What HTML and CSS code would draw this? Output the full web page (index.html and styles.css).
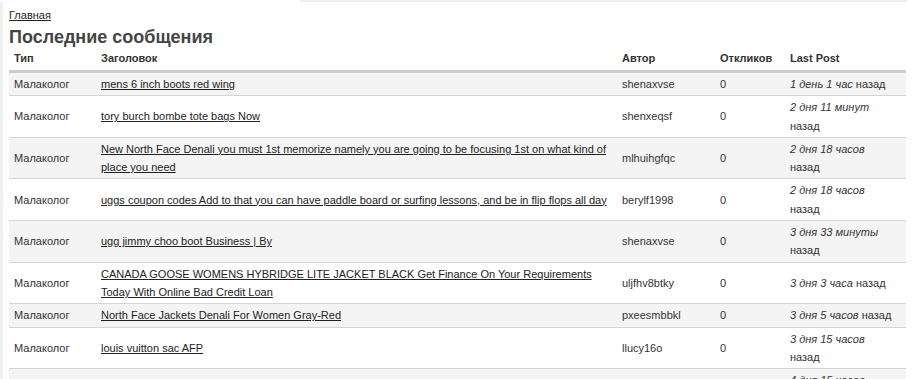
FILE: index.html
```html
<!DOCTYPE html>
<html lang="ru">
<head>
<meta charset="utf-8">
<title>Последние сообщения</title>
<link rel="stylesheet" href="styles.css">
</head>
<body>
<div class="topbar"></div>
<div class="page">
  <div class="crumb"><a href="#">Главная</a></div>
  <h2 class="title">Последние сообщения</h2>
  <table class="posts">
    <colgroup>
      <col class="c-type"><col class="c-topic"><col class="c-author"><col class="c-replies"><col class="c-last">
    </colgroup>
    <thead>
      <tr><th>Тип</th><th>Заголовок</th><th>Автор</th><th>Откликов</th><th>Last Post</th></tr>
    </thead>
    <tbody>
      <tr class="odd"><td>Малаколог</td><td><a href="#">mens 6 inch boots red wing</a></td><td>shenaxvse</td><td>0</td><td><em>1 день 1 час</em> назад</td></tr>
      <tr><td>Малаколог</td><td><a href="#">tory burch bombe tote bags Now</a></td><td>shenxeqsf</td><td>0</td><td><em>2 дня 11 минут</em> назад</td></tr>
      <tr class="odd"><td>Малаколог</td><td><a href="#">New North Face Denali you must 1st memorize namely you are going to be focusing 1st on what kind of place you need</a></td><td>mlhuihgfqc</td><td>0</td><td><em>2 дня 18 часов</em> назад</td></tr>
      <tr><td>Малаколог</td><td><a href="#">uggs coupon codes Add to that you can have paddle board or surfing lessons, and be in flip flops all day</a></td><td>berylf1998</td><td>0</td><td><em>2 дня 18 часов</em> назад</td></tr>
      <tr class="odd"><td>Малаколог</td><td><a href="#">ugg jimmy choo boot Business | By</a></td><td>shenaxvse</td><td>0</td><td><em>3 дня 33 минуты</em> назад</td></tr>
      <tr><td>Малаколог</td><td><a href="#">CANADA GOOSE WOMENS HYBRIDGE LITE JACKET BLACK Get Finance On Your Requirements Today With Online Bad Credit Loan</a></td><td>uljfhv8btky</td><td>0</td><td><em>3 дня 3 часа</em> назад</td></tr>
      <tr class="odd"><td>Малаколог</td><td><a href="#">North Face Jackets Denali For Women Gray-Red</a></td><td>pxeesmbbkl</td><td>0</td><td><em>3 дня 5 часов</em> назад</td></tr>
      <tr><td>Малаколог</td><td><a href="#">louis vuitton sac AFP</a></td><td>llucy16o</td><td>0</td><td><em>3 дня 15 часов</em> назад</td></tr>
      <tr class="odd"><td>Малаколог</td><td><a href="#">canada goose parka</a></td><td>shenaxvse</td><td>0</td><td><em>4 дня 15 часов</em> назад</td></tr>
    </tbody>
  </table>
</div>
</body>
</html>
```
FILE: styles.css
```css
html, body {
  margin: 0;
  padding: 0;
  background: #fff;
}
body {
  font-family: "Liberation Sans", Arial, sans-serif;
  font-size: 11px;
  color: #333;
  overflow: hidden;
}
.topbar {
  height: 2px;
  width: 607px;
  margin-left: 300px;
  background: #eeeeee;
}
.page {
  border-left: 3px solid #f0f0f0;
  padding: 6px 0 0 6px;
}
.crumb {
  line-height: 14px;
}
.crumb a {
  color: #222;
  text-decoration: underline;
}
.title {
  margin: 5px 0 0;
  font-size: 18px;
  line-height: 21px;
  font-weight: bold;
  color: #444;
}
.posts {
  width: 897px;
  border-collapse: collapse;
  table-layout: fixed;
}
.c-type { width: 87px; }
.c-topic { width: 521px; }
.c-author { width: 98px; }
.c-replies { width: 70px; }
.c-last { width: 121px; }
.posts th {
  text-align: left;
  font-weight: bold;
  color: #333;
  padding: 3px 5px 5px;
  line-height: 14px;
  border-bottom: 3px solid #cccccc;
}
.posts td {
  padding: 2px 5px;
  line-height: 18.3px;
  border-bottom: 1px solid #d4d4d4;
  vertical-align: middle;
}
.posts td:last-child {
  padding-right: 12px;
}
.posts tr.odd td {
  background: #f4f4f4;
}
.posts td a {
  color: #222;
  text-decoration: underline;
}
.posts td em {
  font-style: italic;
}
```
